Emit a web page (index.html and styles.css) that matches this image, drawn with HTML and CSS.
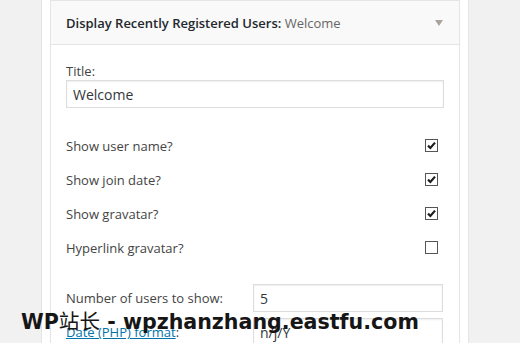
FILE: index.html
```html
<!DOCTYPE html>
<html lang="en">
<head>
  <meta charset="UTF-8" />
  <title>Widgets</title>
  <link rel="stylesheet" href="styles.css">
</head>
<body>

<div class="sidebar">
  <div class="widget">
    <div class="widget-top">
      <h3 class="widget-title">Display Recently Registered Users:<span class="in-title"> Welcome</span></h3>
      <span class="toggle"></span>
    </div>

    <div class="widget-inside">
      <label class="field-label">Title:</label>
      <input class="text-input" type="text" value="Welcome" />

      <div class="options">
        <div class="opt">
          <span>Show user name?</span>
          <span class="check"><svg viewBox="0 0 11 11" width="11" height="11"><path d="M2 5.6 L4.4 8 L9 2.6" /></svg></span>
        </div>
        <div class="opt">
          <span>Show join date?</span>
          <span class="check"><svg viewBox="0 0 11 11" width="11" height="11"><path d="M2 5.6 L4.4 8 L9 2.6" /></svg></span>
        </div>
        <div class="opt">
          <span>Show gravatar?</span>
          <span class="check"><svg viewBox="0 0 11 11" width="11" height="11"><path d="M2 5.6 L4.4 8 L9 2.6" /></svg></span>
        </div>
        <div class="opt">
          <span>Hyperlink gravatar?</span>
          <span class="check"></span>
        </div>
      </div>

      <div class="fields">
        <label>Number of users to show:</label>
        <input class="text-input" type="text" value="5" />
        <label><a href="#">Date (PHP) format</a>:</label>
        <input class="text-input" type="text" value="n/j/Y" />
      </div>
    </div>
  </div>
</div>

<div class="watermark">WP<span class="cjk">站长</span> - wpzhanzhang.eastfu.com</div>

</body>
</html>
```

FILE: styles.css
```css
* {
  box-sizing: border-box;
}

body {
  margin: 0;
  height: 343px;
  overflow: hidden;
  background: #f1f1f1;
  font-family: 'Open Sans', sans-serif;
  font-size: 13px;
  color: #444;
}

.sidebar {
  width: 428px;
  min-height: 343px;
  margin-left: 41px;
  padding: 0 8px;
  background: #fff;
  border-left: 1px solid #e5e5e5;
  border-right: 1px solid #e5e5e5;
}

.widget {
  border: 1px solid #e5e5e5;
  background: #fff;
  box-shadow: 0 1px 1px rgba(0,0,0,0.04);
}

.widget-top {
  display: flex;
  align-items: center;
  justify-content: space-between;
  height: 44px;
  padding: 2px 16px 0 15px;
  background: #f9f9f9;
  border-bottom: 1px solid #e5e5e5;
}

.widget-title {
  margin: 0;
  font-size: 13px;
  font-weight: 600;
  line-height: 41px;
  color: #23282d;
}

.in-title {
  font-weight: 400;
  color: #666;
}

.toggle {
  width: 0;
  height: 0;
  border-left: 4px solid transparent;
  border-right: 4px solid transparent;
  border-top: 6px solid #a9a49c;
  margin-top: -2px;
}

.widget-inside {
  padding: 17px 15px 20px;
}

.field-label {
  display: block;
  line-height: 18px;
}

.text-input {
  display: block;
  width: 100%;
  height: 28px;
  margin: 0;
  padding: 0 6px;
  border: 1px solid #ddd;
  box-shadow: inset 0 1px 2px rgba(0,0,0,0.07);
  background: #fff;
  font-family: 'Open Sans', sans-serif;
  font-size: 14px;
  color: #32373c;
  outline: none;
}

.options {
  margin-top: 21px;
}

.opt {
  display: flex;
  align-items: center;
  justify-content: space-between;
  height: 34px;
  line-height: 18px;
}

.check {
  width: 13px;
  height: 13px;
  margin: 0 6px 1px 0;
  border: 1px solid #555;
  background: #fff;
  display: flex;
  align-items: center;
  justify-content: center;
}

.check path {
  fill: none;
  stroke: #1e1e1e;
  stroke-width: 2.2;
}

.fields {
  display: grid;
  grid-template-columns: 187px 190px;
  row-gap: 6px;
  align-items: center;
  margin-top: 19px;
}

.fields label {
  line-height: 18px;
}

.fields a {
  color: #0073aa;
}

.watermark {
  position: absolute;
  left: 21px;
  top: 308px;
  font-family: 'DejaVu Sans', sans-serif;
  font-weight: bold;
  font-size: 20.6px;
  line-height: 24px;
  color: #161616;
  white-space: nowrap;
}

.cjk {
  font-family: 'Noto Sans CJK SC', sans-serif;
  font-weight: 400;
}
```
